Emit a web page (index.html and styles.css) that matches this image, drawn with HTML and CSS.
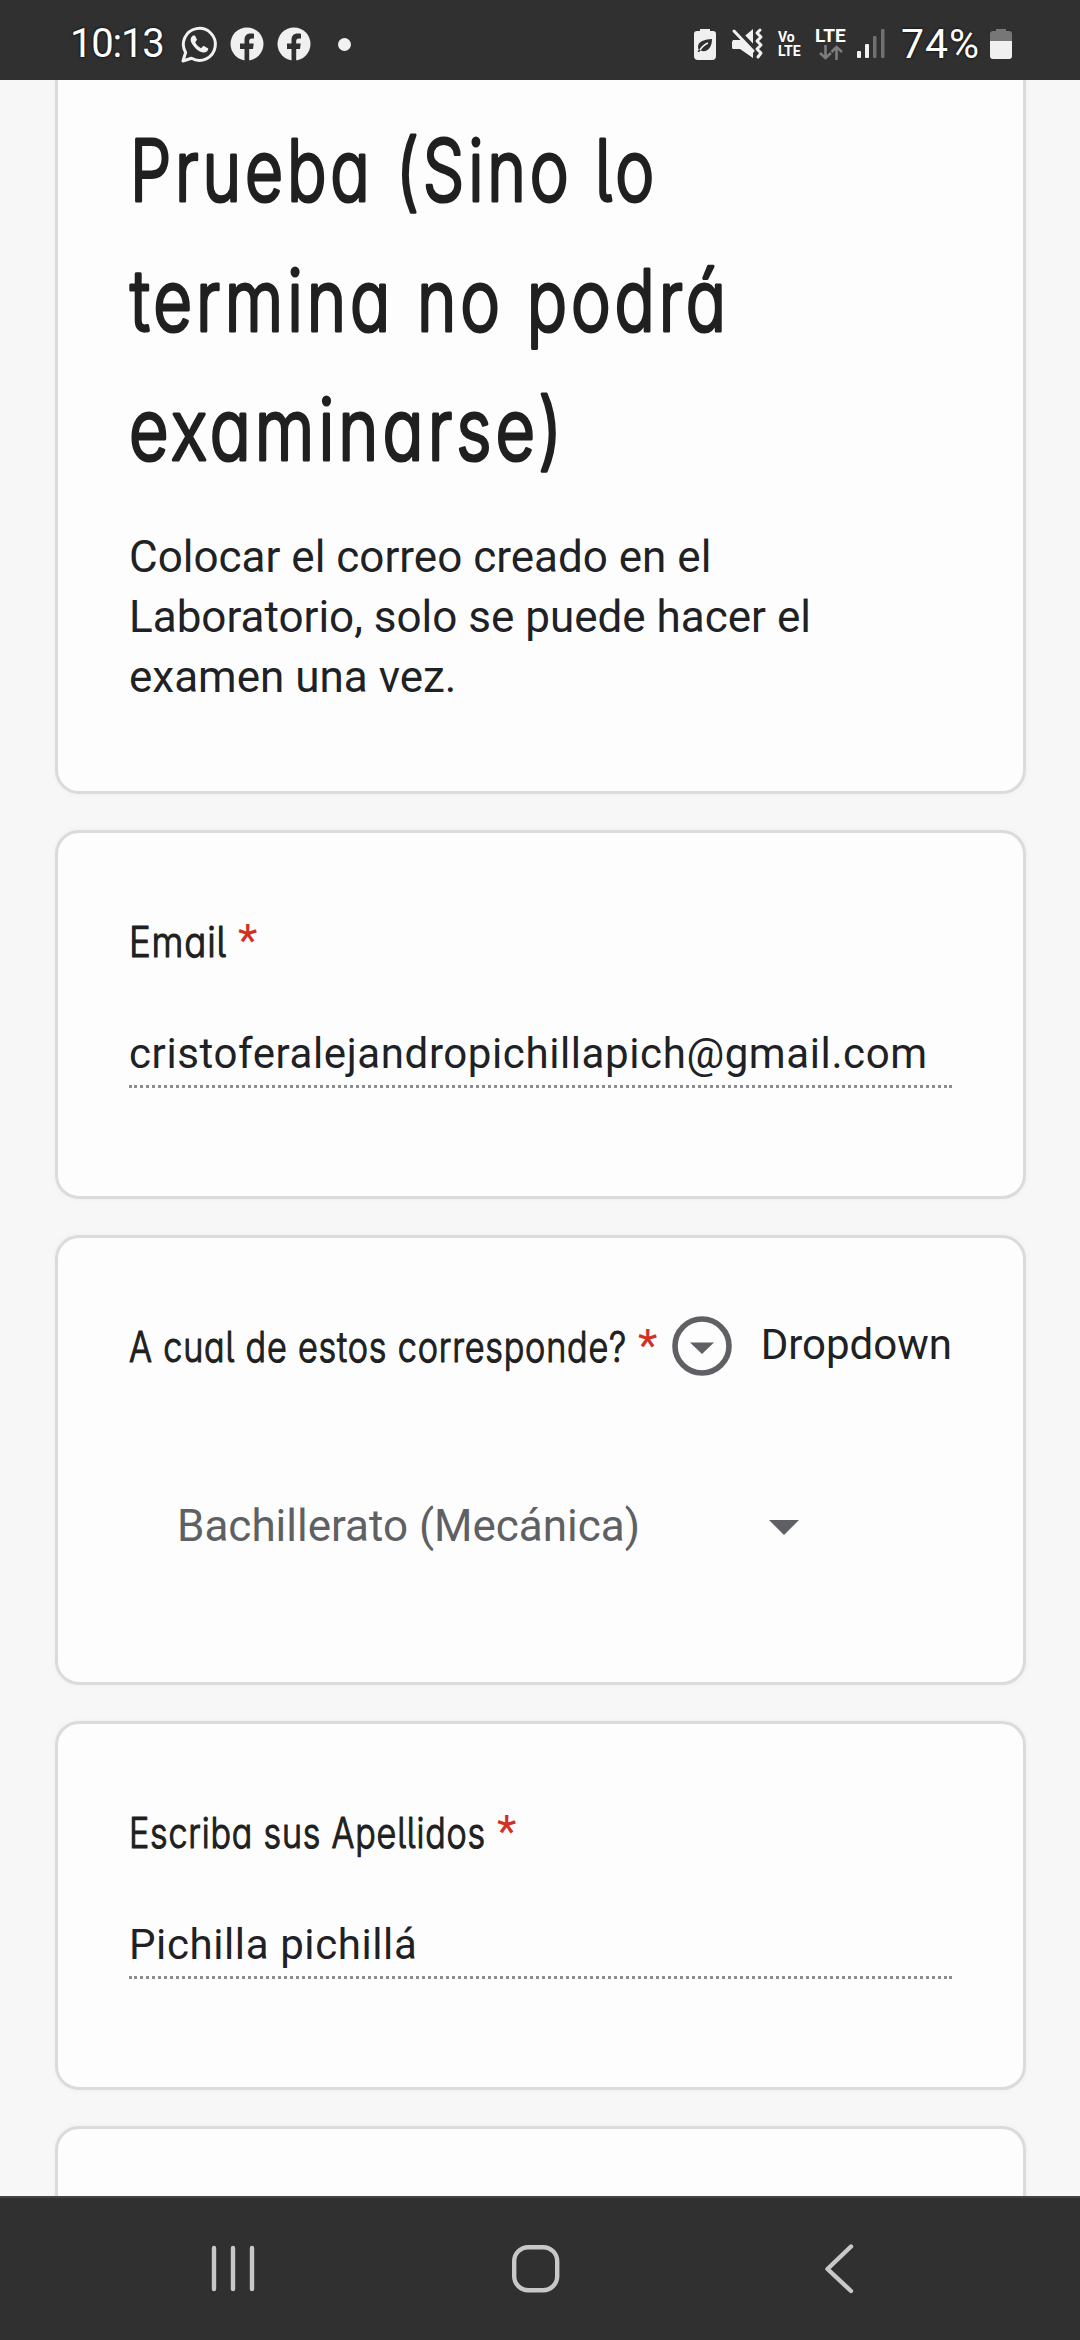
FILE: index.html
```
<!DOCTYPE html>
<html lang="es">
<head>
  <meta charset="UTF-8">
  <title>Prueba</title>
  <meta name="viewport" content="width=device-width, initial-scale=1.0">
  <link rel="stylesheet" href="styles.css">
</head>
<body>
  <header class="status-bar">
    <div class="status-left">
      <span class="clock">10:13</span>
      <svg class="icon-whatsapp" width="37" height="38" viewBox="0 0 37 38">
        <path d="M2 36 L4.6 27.5 A16 16 0 1 1 10.5 33.3 Z" fill="none" stroke="#f2f2f2" stroke-width="3" stroke-linejoin="round"/>
        <path d="M12 10.5 C9.5 12 9 15 10.3 17.5 C13 22.500 17 26.500 22 27.500 C25 27.800 27.300 26 27.300 23.500 L22.500 20.800 L20 23.200 C17.500 22 15.300 19.800 14.200 17.300 L16 14.800 L14 10.500 Z" fill="#f2f2f2"/>
      </svg>
      <svg class="icon-facebook" width="34" height="34" viewBox="0 0 34 34">
        <circle cx="17" cy="17" r="16.500" fill="#f0f0f0"/>
        <path d="M14.500 34 V22 H10 V16.500 H14.500 V13 C14.500 8.500 17 6.500 20.500 6.500 C22 6.500 23.500 6.700 24 6.800 V11.500 H22 C20 11.500 19.200 12.500 19.200 14 V16.500 H23.700 L23 22 H19.200 V34 Z" fill="#303030"/>
      </svg>
      <svg class="icon-facebook" width="34" height="34" viewBox="0 0 34 34">
        <circle cx="17" cy="17" r="16.500" fill="#f0f0f0"/>
        <path d="M14.500 34 V22 H10 V16.500 H14.500 V13 C14.500 8.500 17 6.500 20.500 6.500 C22 6.500 23.500 6.700 24 6.800 V11.500 H22 C20 11.500 19.200 12.500 19.200 14 V16.500 H23.700 L23 22 H19.200 V34 Z" fill="#303030"/>
      </svg>
      <span class="dot"></span>
    </div>
    <div class="status-right">
      <svg width="22" height="32" viewBox="0 0 22 32">
        <path d="M6 3 V1 H16 V3 H19 Q22 3 22 6 V28 Q22 32 18 32 H4 Q0 32 0 28 V6 Q0 3 3 3 Z" fill="#f0f0f0"/>
        <path d="M18 11 C11 11.500 4 13 4 19 C4 20 4.300 21 4.800 21.600 L3.500 24 L5 24 L6.500 22.500 C13 25 18 20 18 11 Z" fill="#303030"/>
        <path d="M6 22 Q9 17 14 15" fill="none" stroke="#f0f0f0" stroke-width="1.500"/>
      </svg>
      <svg class="icon-mute" width="32" height="32" viewBox="0 0 32 32">
        <path d="M1 12 H8 L21 1 V30 L8 21 H1 Q0 21 0 19 V14 Z" fill="#f0f0f0"/>
        <path d="M3 1 L23 22" stroke="#303030" stroke-width="6"/>
        <path d="M2 3 L21 23" stroke="#f0f0f0" stroke-width="3" stroke-linecap="round"/>
        <path d="M28 2 L25 5 L29 9 L25 13 L29 17 L25 21 L29 25 L26 29" fill="none" stroke="#f0f0f0" stroke-width="3" stroke-linejoin="round" stroke-linecap="round"/>
      </svg>
      <span class="volte">Vo<br>LTE</span>
      <span class="lte">LTE
        <svg width="24" height="15" viewBox="0 0 24 15">
          <path d="M6.500 0 V12 M1 8 L6.500 13 L12 8 M17.500 15 V2 M12.500 7 L17.500 2 L23 7" fill="none" stroke="#7d7d7d" stroke-width="2.600"/>
        </svg>
      </span>
      <svg class="icon-signal" width="28" height="32" viewBox="0 0 28 32">
        <rect x="0" y="23" width="4" height="7" rx="1" fill="#f2f2f2"/>
        <rect x="8" y="16" width="4" height="14" rx="1" fill="#f2f2f2"/>
        <rect x="16" y="8" width="3.500" height="22" rx="1" fill="#707070"/>
        <rect x="24" y="1" width="3.500" height="29" rx="1" fill="#707070"/>
      </svg>
      <span class="percent">74%</span>
      <svg width="22" height="32" viewBox="0 0 22 32">
        <path d="M6 3 V1 H16 V3 H19 Q22 3 22 6 V14 H0 V6 Q0 3 3 3 Z" fill="#777"/>
        <path d="M0 13 H22 V28 Q22 31 19 31 H3 Q0 31 0 28 Z" fill="#f0f0f0"/>
      </svg>
    </div>
  </header>

  <main class="form">
    <section class="card card-intro">
      <h1 class="title">
        <svg width="640" height="388" viewBox="0 0 640 388">
          <text x="1" y="97" textLength="528" lengthAdjust="spacingAndGlyphs">Prueba (Sino lo</text>
          <text x="1" y="226.500" textLength="600" lengthAdjust="spacingAndGlyphs">termina no podrá</text>
          <text x="0" y="355.500" textLength="437" lengthAdjust="spacingAndGlyphs">examinarse)</text>
        </svg>
      </h1>
      <p class="description">Colocar el correo creado en el<br>Laboratorio, solo se puede hacer el<br>examen una vez.</p>
    </section>

    <section class="card card-short">
      <div class="question">
        <svg class="label" width="98" height="60" viewBox="0 0 98 60">
          <text x="0" y="44" textLength="98" lengthAdjust="spacingAndGlyphs">Email</text>
        </svg>
        <span class="required">*</span>
      </div>
      <div class="answer">cristoferalejandropichillapich@gmail.com</div>
    </section>

    <section class="card card-select">
      <div class="question">
        <svg class="label" width="498" height="60" viewBox="0 0 498 60">
          <text x="0" y="44" textLength="498" lengthAdjust="spacingAndGlyphs">A cual de estos corresponde?</text>
        </svg>
        <span class="required">*</span>
        <span class="type">
          <svg width="60" height="60" viewBox="0 0 60 60">
            <circle cx="30" cy="30" r="27" fill="none" stroke="#5f6063" stroke-width="5.600"/>
            <path d="M18 26.500 H42 L30 38 Z" fill="#5f6063"/>
          </svg>
          <span>Dropdown</span>
        </span>
      </div>
      <div class="select">
        <span>Bachillerato (Mecánica)</span>
        <svg width="30" height="16" viewBox="0 0 30 16">
          <path d="M0 0 H30 L15 15 Z" fill="#5f6063"/>
        </svg>
      </div>
    </section>

    <section class="card card-short">
      <div class="question">
        <svg class="label" width="357" height="60" viewBox="0 0 357 60">
          <text x="0" y="44" textLength="357" lengthAdjust="spacingAndGlyphs">Escriba sus Apellidos</text>
        </svg>
        <span class="required">*</span>
      </div>
      <div class="answer">Pichilla pichillá</div>
    </section>

    <section class="card"></section>
  </main>

  <nav class="nav-bar">
    <svg width="44" height="46" viewBox="0 0 44 46">
      <path d="M3 2 V43 M22 2 V43 M41 2 V43" stroke="#c8c8c8" stroke-width="4.400" stroke-linecap="round"/>
    </svg>
    <svg class="nav-home" width="48" height="48" viewBox="0 0 48 48">
      <rect x="2.200" y="2.200" width="43" height="43" rx="14" fill="none" stroke="#c8c8c8" stroke-width="4.400"/>
    </svg>
    <svg class="nav-back" width="28" height="50" viewBox="0 0 28 50">
      <path d="M26 2.500 L2.500 25 L26 47" fill="none" stroke="#c8c8c8" stroke-width="4.400" stroke-linecap="round" stroke-linejoin="round"/>
    </svg>
  </nav>
</body>
</html>
```
FILE: styles.css
```
* {
  box-sizing: border-box;
}
body {
  margin: 0;
  height: 2340px;
  display: flex;
  flex-direction: column;
  overflow: hidden;
  background: #f7f7f7;
  color: #202124;
  font-family: Roboto, sans-serif;
}
svg {
  display: block;
  flex: none;
  overflow: visible;
}

/* status bar */
.status-bar {
  flex: none;
  height: 80px;
  padding: 8px 68px 0 70px;
  display: flex;
  justify-content: space-between;
  align-items: center;
  background: #303030;
  color: #fff;
}
.status-left, .status-right {
  display: flex;
  align-items: center;
}
.clock, .percent {
  font-size: 40px;
  line-height: 46px;
  text-shadow: 0 0 3px #000;
}
.clock {
  width: 111px;
  letter-spacing: -1.2px;
}
.icon-whatsapp {
  margin-right: 12px;
}
.icon-facebook {
  margin-right: 13px;
}
.dot {
  width: 13px;
  height: 13px;
  margin-left: 14px;
  border-radius: 50%;
  background: #f2f2f2;
}
.icon-mute {
  margin: 0 14px 0 16px;
}
.volte {
  width: 37px;
  font: bold 14px/14px Roboto, sans-serif;
}
.lte {
  width: 42px;
  height: 34px;
  font: bold 19px/17px Roboto, sans-serif;
}
.lte svg {
  margin: 1px 0 0 4px;
}
.icon-signal {
  margin-right: 16px;
}
.percent {
  width: 89px;
  font-size: 41px;
  letter-spacing: 1px;
}

/* form */
.form {
  flex: 1;
  min-height: 0;
  overflow: hidden;
  padding: 0 54px 0 55px;
}
.card {
  height: 200px;
  margin-bottom: 36px;
  padding: 71px;
  border: 3px solid #dadbdc;
  border-radius: 24px;
  background: #fdfdfd;
  box-shadow: 0 0 5px #eee;
}
.card-intro {
  height: 714px;
  padding-top: 24px;
  border-top: 0;
  border-radius: 0 0 24px 24px;
}
.card-short {
  height: 369px;
}
.card-select {
  height: 450px;
}

/* rounded strokes and single-storey letters for the headings */
.title {
  margin: 0;
}
.title text, .label text {
  font-family: Inter, "Noto Sans", sans-serif;
  font-weight: 300;
  font-feature-settings: "cv11", "cv05", "ss03";
  fill: #202020;
  stroke: #202020;
  stroke-linejoin: round;
}
.title text {
  font-size: 85px;
  letter-spacing: 5px;
  stroke-width: 3.2px;
}
.label text {
  font-size: 42px;
  letter-spacing: 1px;
  stroke-width: 1.2px;
}
.description {
  margin: 35px 0 0;
  font-size: 44px;
  line-height: 60px;
}
.question {
  display: flex;
  align-items: center;
  height: 60px;
  margin-top: 9px;
}
.required {
  margin: -4px 0 0 11px;
  width: 20px;
  color: #d33025;
  font-size: 45px;
  line-height: 60px;
}
.type {
  margin: -4px 0 0 auto;
  display: flex;
  align-items: center;
  gap: 29px;
  font-size: 42px;
}
.type span {
  margin-top: -3px;
}
.answer {
  height: 78px;
  margin-top: 37px;
  padding-top: 14px;
  border-bottom: 3px dotted #8b8c8f;
  font-size: 42px;
  line-height: 60px;
  letter-spacing: 0.6px;
  white-space: nowrap;
}
.select {
  display: flex;
  align-items: center;
  justify-content: space-between;
  width: 622px;
  height: 60px;
  margin: 120px 0 0 48px;
  color: #5f6063;
  font-size: 44px;
}
.select span {
  margin-top: -5px;
}

/* bottom navigation */
.nav-bar {
  flex: none;
  height: 144px;
  padding: 0 226px 0 211px;
  display: flex;
  align-items: center;
  border-top: 2px solid #444;
  background: #303030;
}
.nav-home {
  margin-left: 257px;
}
.nav-back {
  margin-left: 265px;
}
```
